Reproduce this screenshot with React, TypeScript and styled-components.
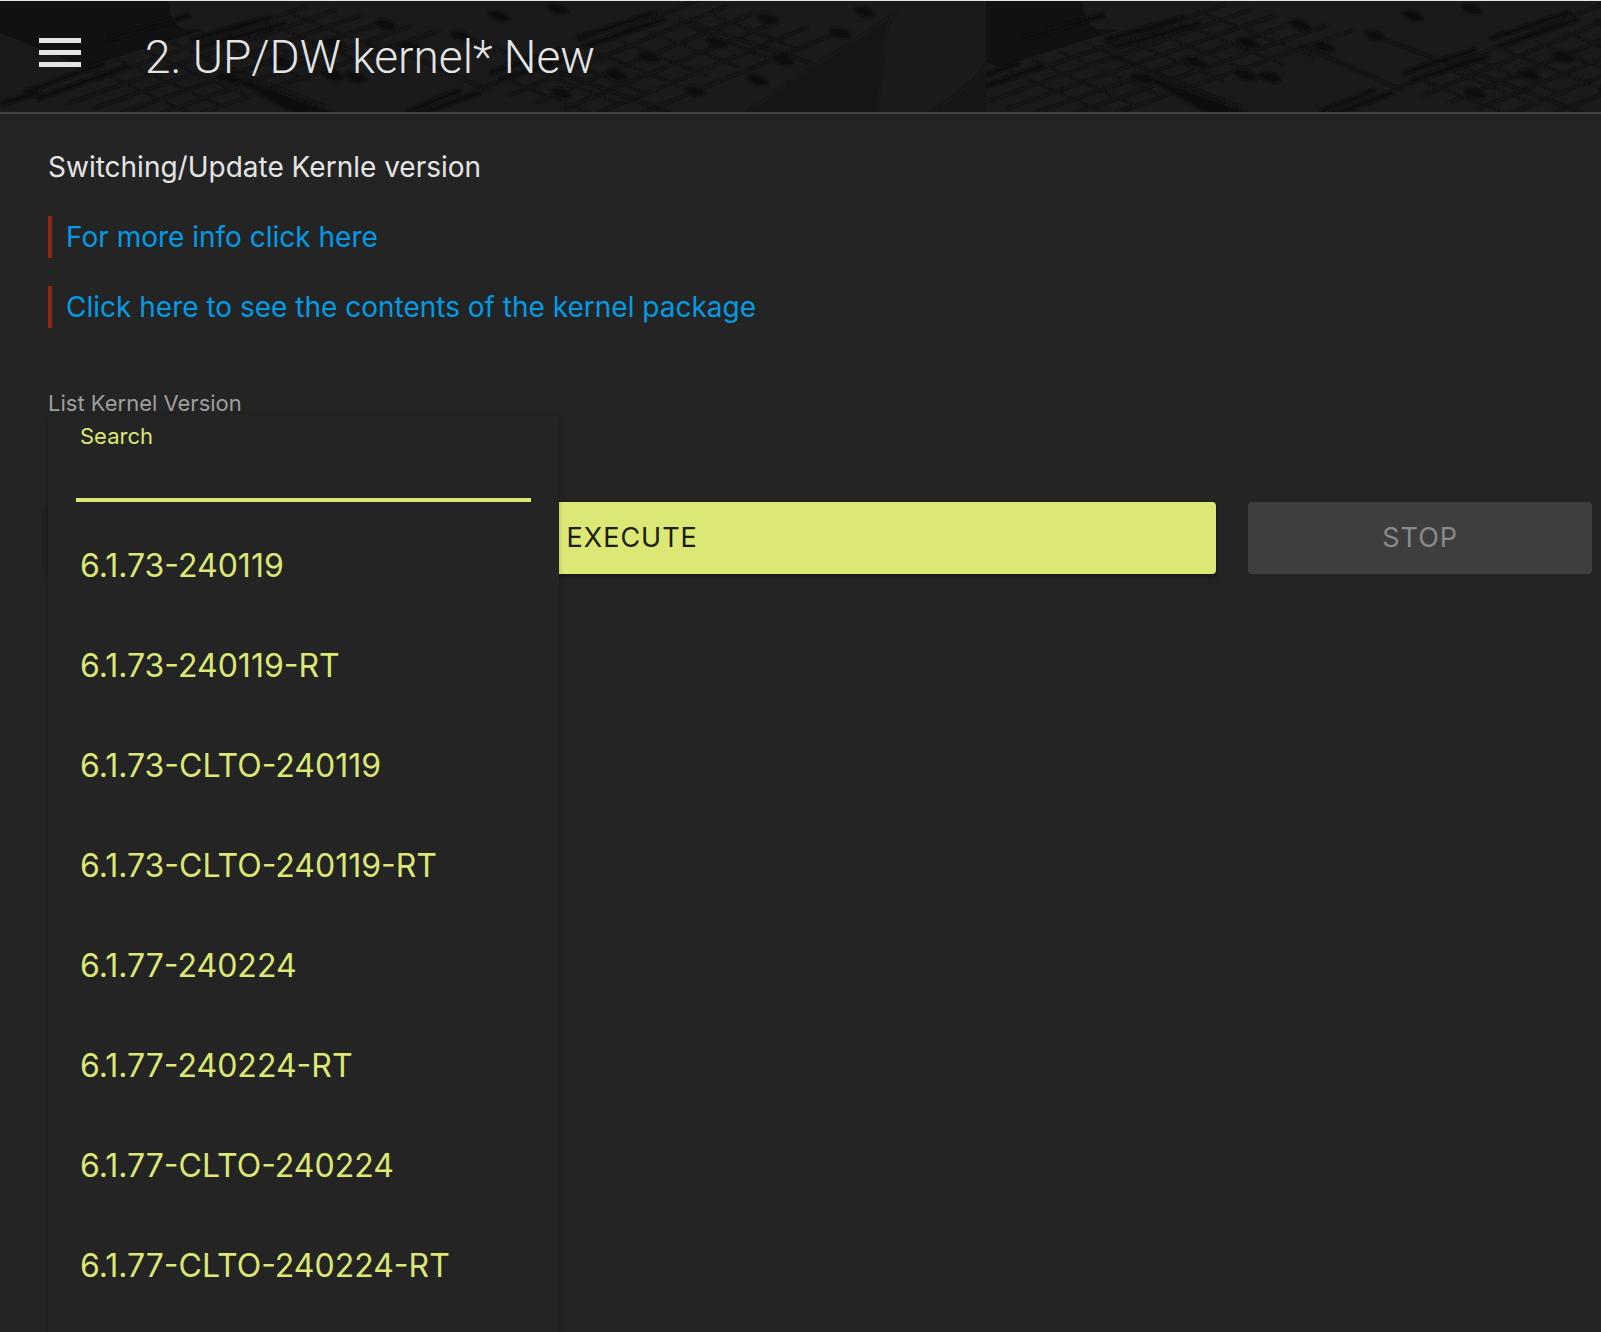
import React, { useState } from "react";
import styled, { createGlobalStyle } from "styled-components";

const color = {
  page: "#242424",
  header: "#1a1a1a",
  headerDark: "#111111",
  headerLine: "#424242",
  text: "#e4e4e4",
  muted: "#9e9e9e",
  lime: "#dce775",
  link: "#039be5",
  quote: "#8c2a1a",
  disabled: "#3e3e3e",
  disabledText: "#8a8a8a",
};

const GlobalStyle = createGlobalStyle`
  *, *::before, *::after { box-sizing: border-box; }
  html { background: ${color.page}; }
  body {
    margin: 0;
    background: ${color.page};
    color: ${color.text};
    font-family: Inter, Roboto, sans-serif;
    font-size: 28px;
    line-height: 42px;
  }
`;

const Page = styled.div`
  position: relative;
  min-height: 100vh;
  overflow: hidden;
`;

const Header = styled.header`
  position: relative;
  display: flex;
  align-items: center;
  gap: 64px;
  height: 114px;
  padding: 0 39px 8px;
  background: ${color.header};
  border-top: 1px solid #dfe5df;
  border-bottom: 2px solid ${color.headerLine};
`;

const Backdrop = styled.svg`
  position: absolute;
  inset: 0;
  width: 100%;
  height: 100%;
`;

const MenuButton = styled.button`
  position: relative;
  display: flex;
  flex-direction: column;
  gap: 7px;
  width: 42px;
  padding: 0;
  border: 0;
  background: none;
  cursor: pointer;
`;

const Bar = styled.span`
  height: 5px;
  background: ${color.text};
`;

const Title = styled.h1`
  position: relative;
  margin: 0;
  padding-top: 8px;
  font-family: Roboto, Inter, sans-serif;
  font-size: 46px;
  line-height: 60px;
  font-weight: 300;
`;

const Content = styled.main`
  padding: 32px 9px 0 48px;
`;

const Lead = styled.p`
  margin: 0 0 28px;
`;

const Quote = styled.blockquote`
  margin: 0 0 28px;
  padding-left: 14px;
  border-left: 4px solid ${color.quote};
`;

const Link = styled.a`
  color: ${color.link};
  text-decoration: none;
`;

const Field = styled.section`
  position: relative;
  margin-top: 61px;
`;

const FieldLabel = styled.h2`
  margin: 0;
  color: ${color.muted};
  font-size: 22px;
  line-height: 28px;
  font-weight: 400;
`;

const Actions = styled.div`
  display: grid;
  grid-template-columns: 17fr 5fr;
  gap: 32px;
  padding-top: 85px;
`;

const ActionButton = styled.button<{ $primary?: boolean }>`
  height: 72px;
  padding: 0 32px;
  border: 0;
  border-radius: 4px;
  background: ${(p) => (p.$primary ? color.lime : color.disabled)};
  color: ${(p) => (p.$primary ? "#1b1d10" : color.disabledText)};
  box-shadow: ${(p) => (p.$primary ? "0 3px 6px rgba(0, 0, 0, 0.35)" : "none")};
  font: inherit;
  font-size: 27px;
  letter-spacing: 1px;
  text-transform: uppercase;
`;

const Dropdown = styled.div`
  position: absolute;
  z-index: 2;
  top: 26px;
  left: 0;
  width: 511px;
  max-width: 100%;
  background: ${color.page};
  box-shadow: 0 2px 6px rgba(0, 0, 0, 0.2);
  color: ${color.lime};
`;

const SearchBox = styled.div`
  display: flex;
  flex-direction: column;
  padding: 7px 28px 0;
`;

const SearchLabel = styled.label`
  padding-left: 4px;
  font-size: 22px;
  line-height: 28px;
`;

const SearchInput = styled.input`
  height: 52px;
  padding: 0 4px;
  border: 0;
  border-bottom: 4px solid ${color.lime};
  border-radius: 0;
  outline: none;
  background: transparent;
  color: ${color.lime};
  font: inherit;
`;

const Options = styled.ul`
  margin: 0;
  padding: 14px 0 60px;
  list-style: none;
`;

const Option = styled.button`
  display: block;
  width: 100%;
  padding: 26px 32px;
  border: 0;
  background: none;
  color: inherit;
  font: inherit;
  font-size: 32px;
  line-height: 48px;
  text-align: left;
  cursor: pointer;
`;

const versions = [
  "6.1.73-240119",
  "6.1.73-240119-RT",
  "6.1.73-CLTO-240119",
  "6.1.73-CLTO-240119-RT",
  "6.1.77-240224",
  "6.1.77-240224-RT",
  "6.1.77-CLTO-240224",
  "6.1.77-CLTO-240224-RT",
];

const notes = [
  [334, 42], [281, 61], [228, 77], [356, 76], [333, 75], [411, 46], [461, 35], [386, 24],
  [499, 15], [558, 8], [561, 92], [649, 56], [616, 74], [717, 42], [768, 18], [865, 11],
  [840, 32], [783, 59], [757, 79], [695, 90],
];

const beams = [
  "M108 38 L190 14", "M191 39 L271 16", "M198 47 L286 22", "M489 72 L561 49", "M497 80 L575 55",
  "M576 38 L656 11", "M584 46 L665 18", "M406 111 L461 89", "M418 114 L480 91",
  "M25 91 L105 62", "M36 98 L130 64", "M0 103 L40 91",
];

function SheetMusic() {
  const staff: string[] = [];
  for (let i = 0; i < 6; i++) {
    staff.push(`M${40 + i * 26} ${98 + i * 5} L${310 + i * 26} ${4 + i * 5}`);
    staff.push(`M${480 + i * 27} ${88 + i * 7} L${700 + i * 27} ${-2 + i * 7}`);
  }
  const crossing: string[] = [];
  for (let i = 0; i < 8; i++) {
    crossing.push(`M${88 + i * 28} ${66 - i * 8} L${190 + i * 30} ${112 - i * 8}`);
    crossing.push(`M${500 + i * 30} ${76 - i * 9} L${590 + i * 30} ${112 - i * 9}`);
  }
  return (
    <g id="sheet">
      <rect width="986" height="112" fill={color.header} />
      <path d="M0 0 H168 Q172 26 184 28 L204 29 L85 66 L0 32 Z" fill={color.headerDark} />
      <g filter="url(#soft)" stroke={color.headerDark} fill="none">
        <path d={staff.join(" ")} strokeWidth="2" />
        <path d={crossing.join(" ")} strokeWidth="1" />
        <path d={beams.join(" ")} strokeWidth="5" />
        <path
          d="M196 54 L326 106 M386 44 L490 90 M460 35 L670 112 M680 18 L810 62 M600 86 L668 112"
          strokeWidth="2"
        />
        <path d="M225 72 L258 84 L334 112 H292 Z" fill={color.headerDark} />
        <path d="M745 112 L803 72 L898 10 Q878 34 884 60 L876 112 Z" fill="#171717" stroke="none" />
        <path d="M798 70 V112" strokeWidth="1" />
        <path d="M928 112 Q962 92 986 65 V112 Z" fill="#131313" stroke="none" />
        {notes.map(([x, y]) => (
          <ellipse
            key={`${x}-${y}`}
            cx={x}
            cy={y}
            rx="11"
            ry="5"
            fill={color.headerDark}
            stroke="none"
            transform={`rotate(18 ${x} ${y})`}
          />
        ))}
      </g>
    </g>
  );
}

export default function App() {
  const [query, setQuery] = useState("");
  const shown = versions.filter((v) => v.toLowerCase().includes(query.toLowerCase()));

  return (
    <>
      <GlobalStyle />
      <Page>
        <Header>
          <Backdrop viewBox="0 0 1601 111" preserveAspectRatio="xMinYMin slice" aria-hidden="true">
            <defs>
              <filter id="soft">
                <feGaussianBlur stdDeviation="1" />
              </filter>
              <clipPath id="next">
                <rect x="72" width="914" height="112" />
              </clipPath>
            </defs>
            <SheetMusic />
            <g transform="translate(914 0)">
              <use href="#sheet" clipPath="url(#next)" />
            </g>
          </Backdrop>
          <MenuButton type="button" aria-label="Menu">
            <Bar />
            <Bar />
            <Bar />
          </MenuButton>
          <Title>2. UP/DW kernel* New</Title>
        </Header>
        <Content>
          <Lead>Switching/Update Kernle version</Lead>
          <Quote>
            <Link href="#info">For more info click here</Link>
          </Quote>
          <Quote>
            <Link href="#package">Click here to see the contents of the kernel package</Link>
          </Quote>
          <Field>
            <FieldLabel>List Kernel Version</FieldLabel>
            <Dropdown>
              <SearchBox>
                <SearchLabel htmlFor="search">Search</SearchLabel>
                <SearchInput id="search" value={query} onChange={(e) => setQuery(e.target.value)} />
              </SearchBox>
              <Options>
                {shown.map((version) => (
                  <li key={version}>
                    <Option type="button">{version}</Option>
                  </li>
                ))}
              </Options>
            </Dropdown>
            <Actions>
              <ActionButton type="button" $primary>
                Execute
              </ActionButton>
              <ActionButton type="button" disabled>
                Stop
              </ActionButton>
            </Actions>
          </Field>
        </Content>
      </Page>
    </>
  );
}
